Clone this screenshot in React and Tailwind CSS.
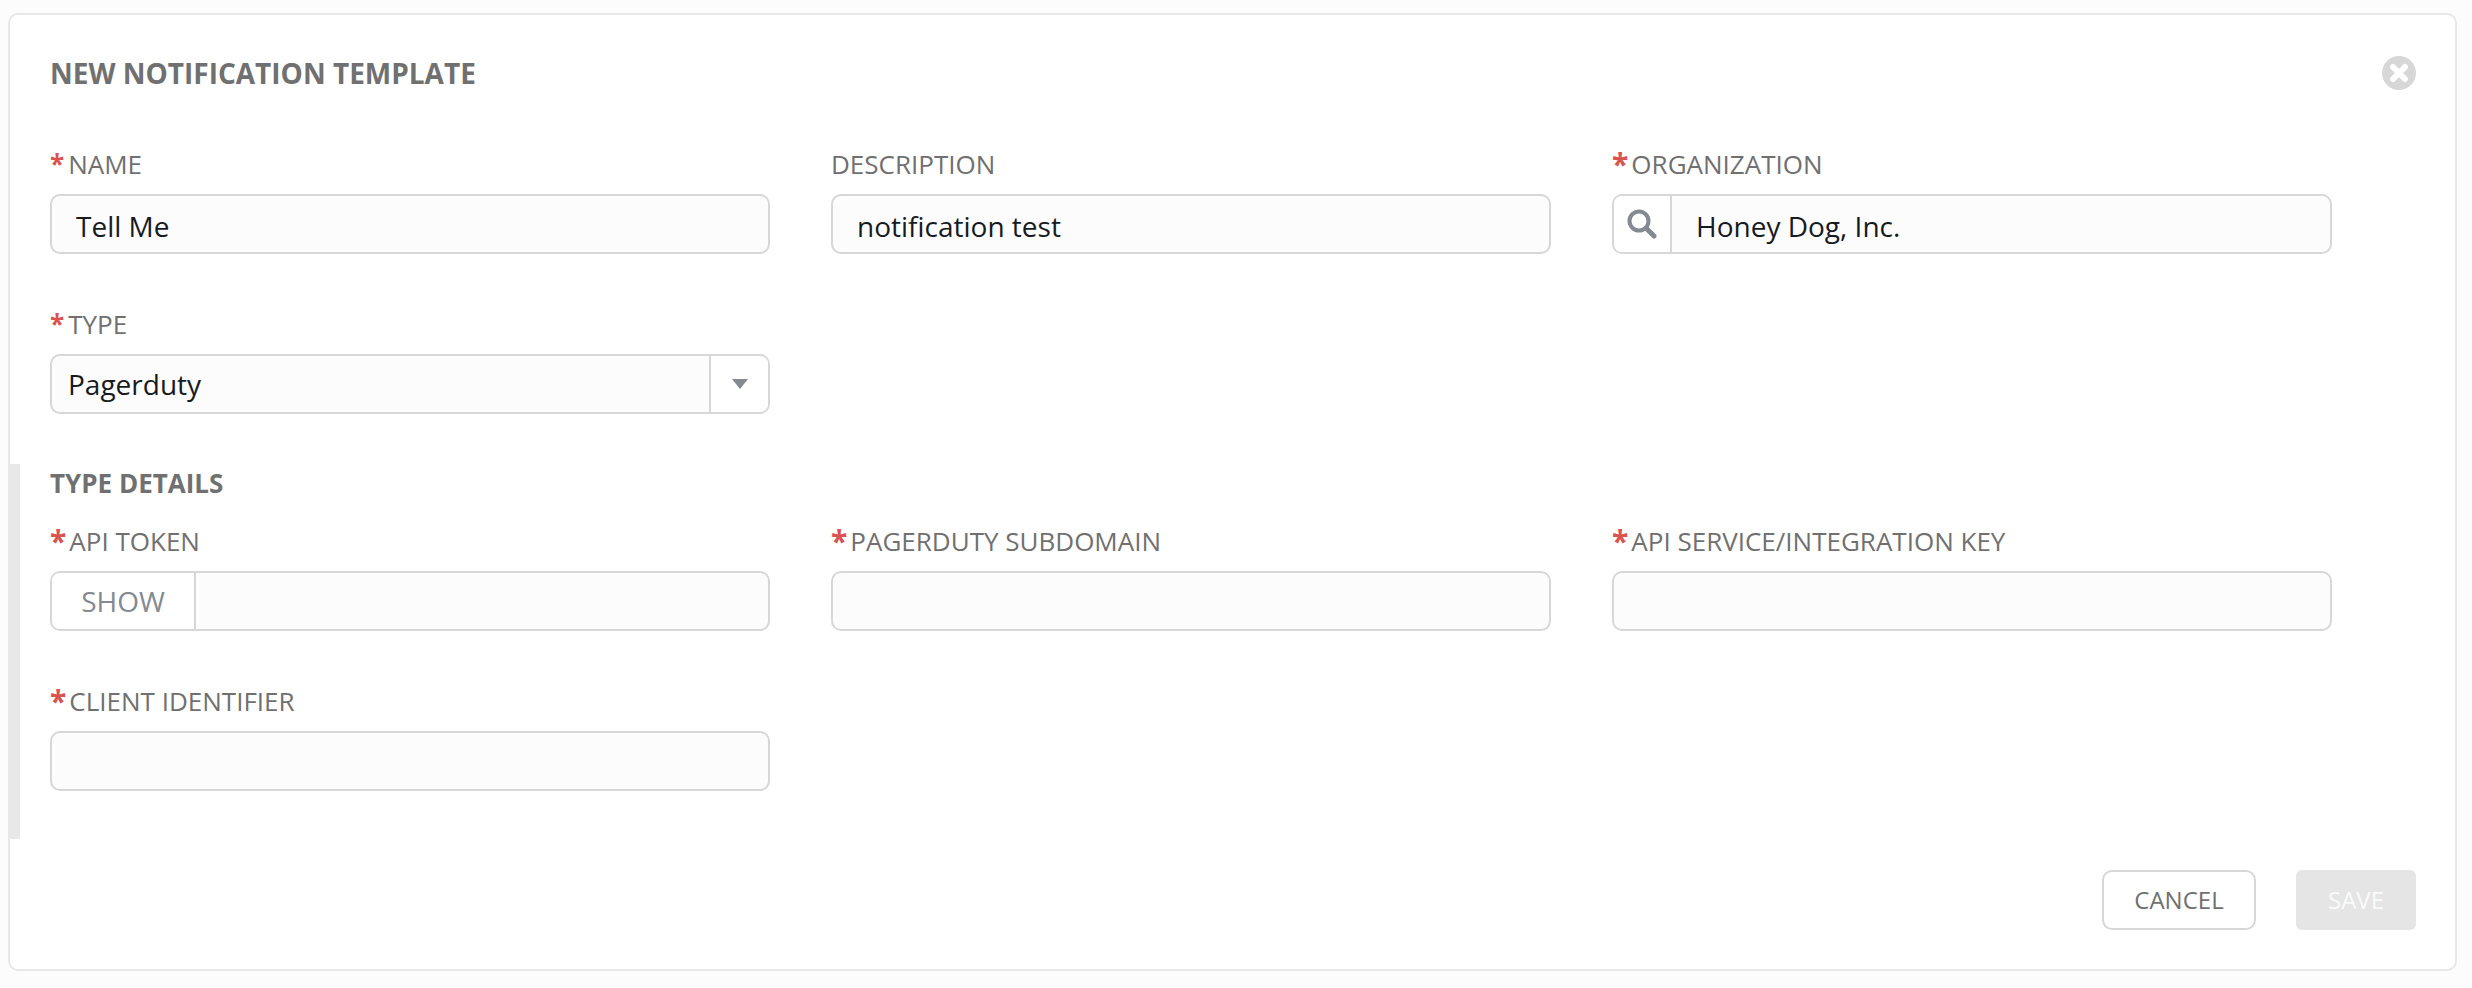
function Label({ text, required, big }) {
  return (
    <label className="flex items-center h-[30px] mb-[15px] text-[26px] leading-[30px] text-[#707070]">
      {required && <span className={`text-[#d9534f] font-bold ${big ? 'text-[30px] mr-[3px]' : 'text-[26px] mr-[4px]'}`}>*</span>}
      {text}
    </label>
  )
}

function TextInput({ value = '', pad = 'pl-[24px]' }) {
  return (
    <input readOnly value={value}
      className={`block w-full h-[60px] rounded-[10px] border-2 border-[#d7d7d7] bg-[#fcfcfc] pt-[3px] text-[28px] text-[#161b1f] outline-none ${pad}`} />
  )
}

function Field({ label, required = true, big, children }) {
  return (
    <div>
      <Label text={label} required={required} big={big} />
      {children}
    </div>
  )
}

export default function App() {
  return (
    <div className="min-h-screen bg-[#fcfcfc] pt-[13px] pl-[8px] font-['Open_Sans',sans-serif]">
      <div className="w-[2449px] h-[958px] rounded-[10px] border-2 border-[#e8e8e8] bg-white pl-[40px] pr-[39px] pt-[43px]">
        {/* Header */}
        <div className="flex items-center justify-between h-[30px]">
          <h1 className="text-[28px] leading-[30px] font-bold text-[#707070]">NEW NOTIFICATION TEMPLATE</h1>
          <button className="w-[34px] h-[34px] rounded-full bg-[#d7d7d7] flex items-center justify-center">
            <svg width="20" height="20" viewBox="0 0 20 20">
              <path d="M4 4l12 12M16 4L4 16" stroke="#fff" strokeWidth="6" strokeLinecap="round" />
            </svg>
          </button>
        </div>

        {/* Main fields */}
        <div className="grid grid-cols-[720px_720px_720px] gap-x-[61px] gap-y-[55px] mt-[61px]">
          <Field label="NAME"><TextInput value="Tell Me" /></Field>
          <Field label="DESCRIPTION" required={false}><TextInput value="notification test" /></Field>
          <Field label="ORGANIZATION" big>
            <div className="flex h-[60px] rounded-[10px] border-2 border-[#d7d7d7] bg-[#fcfcfc] overflow-hidden">
              <div className="w-[58px] shrink-0 bg-white border-r-2 border-[#d7d7d7] flex items-center justify-center">
                <svg width="30" height="30" viewBox="0 0 30 30" fill="none" stroke="#848992">
                  <circle cx="12" cy="12" r="9.5" strokeWidth="4" />
                  <path d="M19.5 19.5L27 27" strokeWidth="5" strokeLinecap="round" />
                </svg>
              </div>
              <input readOnly value="Honey Dog, Inc."
                className="flex-1 min-w-0 bg-transparent pl-[24px] pt-[3px] text-[28px] text-[#161b1f] outline-none" />
            </div>
          </Field>
          <Field label="TYPE">
            <div className="flex h-[60px] rounded-[10px] border-2 border-[#d7d7d7] bg-[#fcfcfc] overflow-hidden">
              <div className="flex-1 pl-[16px] text-[28px] leading-[56px] text-[#161b1f]">Pagerduty</div>
              <div className="w-[59px] bg-white border-l-2 border-[#d7d7d7] flex items-center justify-center">
                <span className="w-0 h-0 border-x-[8px] border-x-transparent border-t-[10px] border-t-[#848992]" />
              </div>
            </div>
          </Field>
        </div>

        {/* Type details */}
        <div className="-ml-[42px] mt-[50px] border-l-[12px] border-[#e8e8e8] pl-[30px] pt-[4px] pb-[48px]">
          <h2 className="text-[26px] leading-[30px] font-bold text-[#707070] mb-[28px]">TYPE DETAILS</h2>
          <div className="grid grid-cols-[720px_720px_720px] gap-x-[61px] gap-y-[55px]">
            <Field label="API TOKEN" big>
              <div className="flex h-[60px] rounded-[10px] border-2 border-[#d7d7d7] bg-[#fcfcfc] overflow-hidden">
                <div className="w-[144px] shrink-0 bg-white border-r-2 border-[#d7d7d7] flex items-center justify-center text-[28px] text-[#848992]">SHOW</div>
              </div>
            </Field>
            <Field label="PAGERDUTY SUBDOMAIN" big><TextInput /></Field>
            <Field label="API SERVICE/INTEGRATION KEY" big><TextInput /></Field>
            <Field label="CLIENT IDENTIFIER" big><TextInput /></Field>
          </div>
        </div>

        {/* Actions */}
        <div className="flex justify-end gap-[40px] mt-[31px]">
          <button className="w-[154px] h-[60px] rounded-[10px] border-2 border-[#d7d7d7] bg-white text-[24px] text-[#707070]">CANCEL</button>
          <button className="w-[120px] h-[60px] rounded-[6px] bg-[#e5e5e5] text-[24px] text-[#fafafa]">SAVE</button>
        </div>
      </div>
    </div>
  )
}
